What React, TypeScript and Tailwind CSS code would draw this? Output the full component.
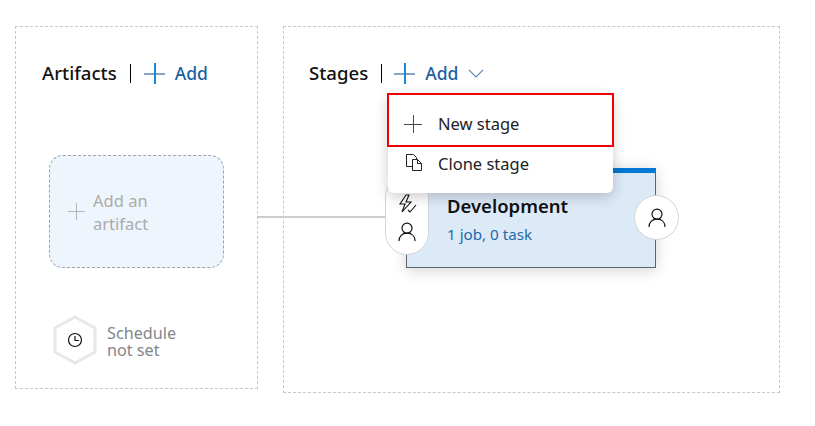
import React from 'react';

const font = { fontFamily: '"Noto Sans", "Open Sans", sans-serif' };

const PlusIcon: React.FC<{ size: number; h: string; v: string; bar?: number }> = ({ size, h, v, bar = 1 }) => (
  <svg width={size} height={size} viewBox={`0 0 ${size} ${size}`} className="shrink-0">
    <rect x={0} y={Math.floor(size / 2)} width={size} height={bar} fill={h} />
    <rect x={Math.floor(size / 2)} y={0} width={bar} height={size} fill={v} />
  </svg>
);

const PersonIcon: React.FC = () => (
  <svg width="18" height="20" viewBox="0 0 18 20" fill="none" stroke="#111" strokeWidth="1.2">
    <circle cx="9" cy="6.2" r="5" />
    <path d="M1 19c0-4.500 3-7.800 8-7.800s8 3.300 8 7.800" />
  </svg>
);

const AddButton: React.FC = () => (
  <div className="flex items-center">
    <PlusIcon size={21} h="#8ba2bd" v="#1a8ad0" bar={2} />
    <span className="ml-[10px] text-[17.500px] font-medium text-[#1b5fa3]">Add</span>
  </div>
);

export default function App() {
  return (
    <div className="relative h-[426px] w-[815px] overflow-hidden bg-white" style={font}>
      <div className="flex gap-[25px] pl-[15px] pt-[26px]">
        {/* artifacts */}
        <div className="h-[363px] w-[243px] border border-dashed border-[#c8c8c8] pl-[26px] pt-[32px]">
          <div className="flex h-[28px] items-center">
            <span className="text-[18.600px] font-medium leading-none text-[#111]">Artifacts</span>
            <div className="ml-[13px] mr-[13px] h-[19px] w-px bg-black" />
            <AddButton />
          </div>
          <div className="ml-[7px] mt-[68px] flex h-[113px] w-[175px] items-center rounded-[14px] border border-dashed border-[#9aa3ab] bg-[#eef5fc] pl-[18px]">
            <PlusIcon size={17} h="#b5b5b5" v="#b5b5b5" />
            <span className="ml-[8px] text-[16.500px] leading-[23px] text-[#ababab]">
              Add an
              <br />
              artifact
            </span>
          </div>
          <div className="ml-[11px] mt-[47px] flex items-center">
            <svg width="44" height="50" viewBox="0 0 44 50" fill="#fff" stroke="#e8e8e8" strokeWidth="3">
              <path d="M22 2l20 11v24L22 48 2 37V13z" />
              <circle cx="22" cy="25" r="6.500" fill="none" stroke="#111" strokeWidth="1.200" />
              <path d="M22 21v4.500h4" fill="none" stroke="#111" strokeWidth="1.200" />
            </svg>
            <span className="ml-[10px] pt-[4px] text-[16.200px] leading-[17px] text-[#83868b]">
              Schedule
              <br />
              not set
            </span>
          </div>
        </div>

        {/* stages */}
        <div className="h-[367px] w-[497px] border border-dashed border-[#c8c8c8] pl-[25px] pt-[32px]">
          <div className="flex h-[28px] items-center">
            <span className="text-[18.600px] font-medium leading-none text-[#111]">Stages</span>
            <div className="ml-[13px] mr-[12px] h-[19px] w-px bg-black" />
            <AddButton />
            <svg width="16" height="9" viewBox="0 0 16 9" fill="none" stroke="#5b87b5" strokeWidth="1.100" className="ml-[10px]">
              <path d="M1 1l7 7 7-7" />
            </svg>
          </div>
          <div className="ml-[97px] mt-[81px] h-[100px] w-[250px] border-x border-b border-[#5f6368] border-t-[5px] border-t-[#0078d4] bg-[#dce9f7] pl-[40px] pt-[20px] shadow-[0_2px_14px_rgba(0,0,0,0.18)]">
            <div className="text-[18.500px] font-semibold leading-[26px] text-[#111]">Development</div>
            <div className="mt-[5px] text-[15.200px] leading-[20px] text-[#1f6aa8]">1 job, 0 task</div>
          </div>
        </div>
      </div>

      {/* connector */}
      <div className="absolute left-[258px] top-[216px] h-[2px] w-[128px] bg-[#cdcdcd]" />

      {/* pre-deployment pill */}
      <div className="absolute left-[385px] top-[175px] flex h-[80px] w-[44px] flex-col items-center justify-end gap-[8px] rounded-[22px] border border-[#d4d4d4] bg-white pb-[12px]">
        <svg width="20" height="20" viewBox="0 0 20 20" fill="none" stroke="#111" strokeWidth="1.100">
          <path d="M9 1L3 10h5l-3 8 9-10H9l3-7z" />
          <path d="M11 16l2 2 6-7" />
        </svg>
        <PersonIcon />
      </div>

      {/* post-deployment */}
      <div className="absolute left-[634px] top-[195px] flex h-[45px] w-[45px] items-center justify-center rounded-full border border-[#d4d4d4] bg-white">
        <PersonIcon />
      </div>

      {/* dropdown */}
      <div className="absolute left-[388px] top-[94px] flex h-[99px] w-[225px] flex-col rounded-b-[6px] bg-white shadow-[0_4px_14px_rgba(0,0,0,0.2)]">
        <div className="-mx-px -mt-px flex h-[54px] items-center border-2 border-[#f00000] pl-[15px] pt-[7px]">
          <PlusIcon size={18} h="#444" v="#8e2a2a" />
          <span className="ml-[16px] text-[16.500px] leading-[24px] text-[#222]">New stage</span>
        </div>
        <div className="flex h-[34px] items-center pl-[17px]">
          <svg width="19" height="19" viewBox="0 0 19 19" fill="none" stroke="#222" strokeWidth="1" className="-mt-[3px] shrink-0">
            <path d="M1.500 1.500h7l3 3v9h-10z" />
            <path d="M7.500 6.500h5l4 4v7h-9z" fill="#fff" />
            <path d="M12.500 6.500v4h4" />
          </svg>
          <span className="ml-[14px] text-[16.500px] leading-[24px] text-[#222]">Clone stage</span>
        </div>
      </div>
    </div>
  );
}
